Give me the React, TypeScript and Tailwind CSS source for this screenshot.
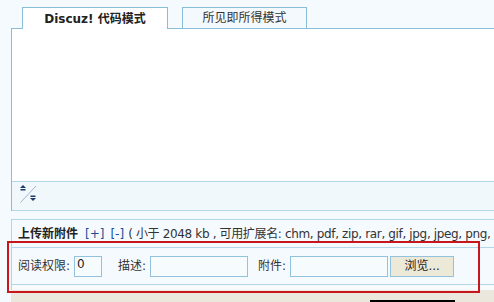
const font = "font-['Tahoma','DejaVu_Sans','Noto_Sans_CJK_SC',sans-serif]";

const ResizeIcon = () => (
    <svg width="17" height="18" viewBox="0 0 17 18">
        <line x1="0.5" y1="17.5" x2="16" y2="1" stroke="#9fb4c6" strokeWidth="1" />
        <path d="M3 0 L6 3 L0 3 Z" fill="#1d3b6b" />
        <rect x="0.5" y="4" width="5" height="1.5" fill="#1d3b6b" />
        <rect x="10.5" y="10.5" width="5" height="1.5" fill="#1d3b6b" />
        <path d="M10 13 L16 13 L13 16 Z" fill="#1d3b6b" />
    </svg>
);

const Field = ({ label, width, value = "" }: { label: string; width: string; value?: string }) => (
    <div className="flex items-center">
        <span className="text-[12px] text-[#333] mr-[4px]">{label}</span>
        <div className={`${width} h-[21px] border border-[#93c3dc] bg-[#f6fbfe] text-[12px] leading-[14px] text-[#222] pl-[2px]`}>
            {value}
        </div>
    </div>
);

export default function App() {
    return (
        <div className={`relative w-[494px] h-[302px] overflow-hidden bg-[#f5fafe] ${font}`}>
            <div className="ml-[11px]">
                <div className="flex items-end h-[29px] border-b border-[#8abdd6] pl-[11px] gap-[14px]">
                    <div className="w-[146px] h-[22px] -mb-px bg-white border border-b-0 border-[#8abdd6] flex items-center justify-center text-[12px] font-bold text-[#222]">
                        Discuz! 代码模式
                    </div>
                    <div className="w-[125px] h-[21px] border border-b-0 border-[#8abdd6] bg-[#f3f9fd] flex items-center justify-center text-[12px] text-[#333]">
                        所见即所得模式
                    </div>
                </div>

                <div className="border-l border-[#8abdd6]">
                    <div className="h-[152px] bg-white" />
                    <div className="h-[30px] bg-[#f1f8fc] border-t border-b border-[#b3d6e8] pl-[8px] pt-[3px]">
                        <ResizeIcon />
                    </div>
                </div>

                <div className="h-[8px]" />

                <div className="border-l border-t border-[#b3d6e8]">
                    <div className="h-[27px] flex items-center pl-[6px] whitespace-nowrap text-[12px] text-[#333]">
                        <span className="font-bold text-[#222]">上传新附件</span>
                        <span className="ml-[7px] text-[#1c4d94]">[+]</span>
                        <span className="ml-[6px] text-[#1c4d94]">[-]</span>
                        <span className="ml-[4px] tracking-[-0.35px]">( 小于 2048 kb , 可用扩展名: chm, pdf, zip, rar, gif, jpg, jpeg, png,</span>
                    </div>
                    <div className="h-[38px] border-t border-b border-[#b3d6e8] flex items-center pl-[6px]">
                        <Field label="阅读权限:" width="w-[28px]" value="0" />
                        <div className="ml-[16px]">
                            <Field label="描述:" width="w-[98px]" />
                        </div>
                        <div className="ml-[10px]">
                            <Field label="附件:" width="w-[98px]" />
                        </div>
                        <div className="ml-[2px] w-[64px] h-[21px] border border-[#93c3dc] bg-[#ece9d8] text-[12px] text-[#222] flex items-center justify-center">
                            浏览...
                        </div>
                    </div>
                    <div className="h-[5px] bg-[#f8fbfd]" />
                </div>
                <div className="h-[12px] bg-[#ebe7dc] pt-[10px] pl-[359px]">
                    <div className="w-[85px] h-[2px] bg-black" />
                </div>
            </div>

            <div className="absolute left-[7px] top-[241px] w-[473px] h-[52px] border-2 border-[#c8161d]" />
        </div>
    );
}
